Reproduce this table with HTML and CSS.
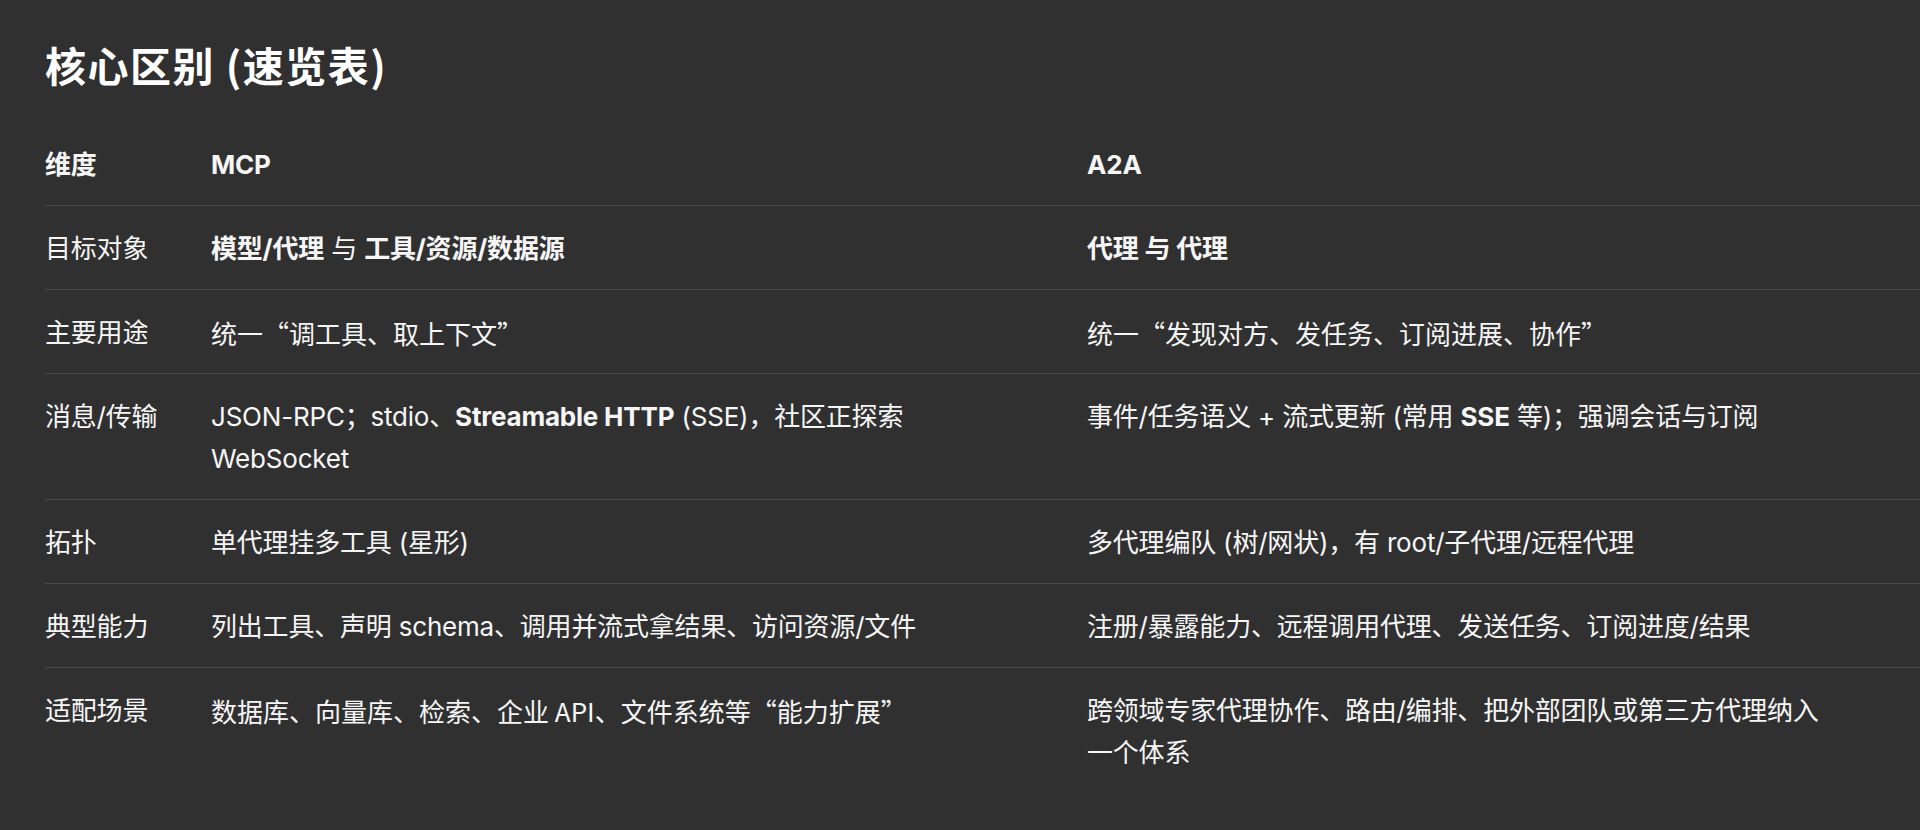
FILE: index.html
```html
<!DOCTYPE html>
<html lang="zh-CN">
<head>
<meta charset="utf-8">
<title>核心区别 (速览表)</title>
<link rel="stylesheet" href="styles.css">
</head>
<body>
<main class="page">
  <h2 class="title">核心区别 (速览表)</h2>
  <div class="table-wrap">
    <table class="cmp">
      <colgroup><col class="c1"><col class="c2"><col class="c3"></colgroup>
      <thead>
        <tr><th>维度</th><th>MCP</th><th>A2A</th></tr>
      </thead>
      <tbody>
        <tr>
          <td>目标对象</td>
          <td><strong>模型/代理</strong> 与 <strong>工具/资源/数据源</strong></td>
          <td><strong>代理 与 代理</strong></td>
        </tr>
        <tr>
          <td>主要用途</td>
          <td class="cjk">统一“调工具、取上下文”</td>
          <td class="cjk">统一“发现对方、发任务、订阅进展、协作”</td>
        </tr>
        <tr>
          <td>消息/传输</td>
          <td>JSON-RPC；stdio、<strong>Streamable HTTP</strong> (SSE)，社区正探索 WebSocket</td>
          <td>事件/任务语义 + 流式更新 (常用 <strong>SSE</strong> 等)；强调会话与订阅</td>
        </tr>
        <tr>
          <td>拓扑</td>
          <td>单代理挂多工具 (星形)</td>
          <td>多代理编队 (树/网状)，有 root/子代理/远程代理</td>
        </tr>
        <tr>
          <td>典型能力</td>
          <td>列出工具、声明 schema、调用并流式拿结果、访问资源/文件</td>
          <td>注册/暴露能力、远程调用代理、发送任务、订阅进度/结果</td>
        </tr>
        <tr>
          <td>适配场景</td>
          <td class="cjk">数据库、向量库、检索、企业 API、文件系统等“能力扩展”</td>
          <td>跨领域专家代理协作、路由/编排、把外部团队或第三方代理纳入一个体系</td>
        </tr>
      </tbody>
    </table>
  </div>
</main>
</body>
</html>
```

FILE: styles.css
```css
html, body {
  margin: 0;
  background: #303030;
}

body {
  font-family: Inter, "Noto Sans CJK SC", sans-serif;
  color: #f6f6f6;
  text-spacing-trim: space-all;
}

.page {
  padding: 37px 0 0 45px;
  overflow: hidden;
  height: 830px;
  box-sizing: border-box;
}

.title {
  margin: 0;
  font-family: "Noto Sans CJK SC", sans-serif;
  font-size: 41px;
  line-height: 54px;
  font-weight: 700;
  letter-spacing: 1.5px;
  color: #ffffff;
}

.table-wrap {
  margin-top: 31px;
  overflow: hidden;
}

.cmp {
  border-collapse: collapse;
  table-layout: fixed;
  width: 1875px;
  font-size: 26px;
  line-height: 42px;
  letter-spacing: -0.2px;
}

.c1 { width: 166px; }
.c2 { width: 876px; }

.cmp th,
.cmp td {
  text-align: left;
  vertical-align: top;
  padding: 22px 40px 19px 0;
  font-weight: 400;
}

.cmp th {
  font-weight: 700;
}

.cmp td:nth-child(3),
.cmp th:nth-child(3) {
  padding-right: 83px;
}

.cmp thead tr,
.cmp tbody tr:not(:last-child) {
  border-bottom: 1px solid #4a4a4a;
}

.cmp strong {
  font-weight: 700;
}

.cmp .cjk {
  font-family: "Noto Sans CJK SC", sans-serif;
  letter-spacing: 0;
}
```
